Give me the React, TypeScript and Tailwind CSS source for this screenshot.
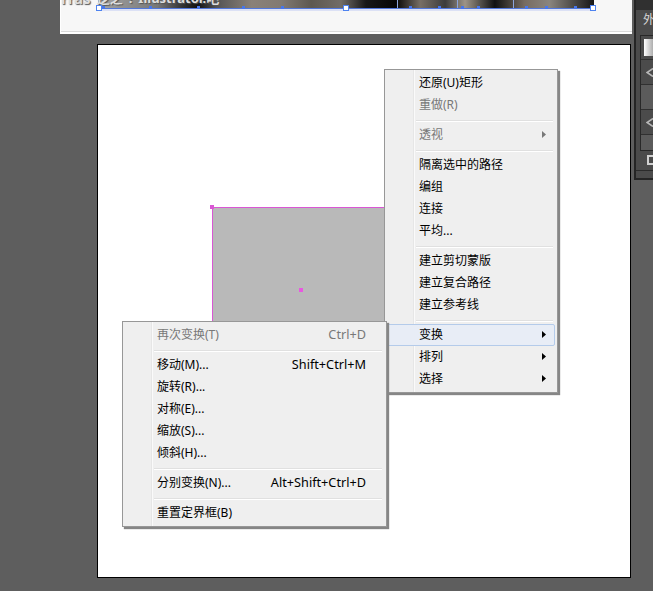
import React from "react";

type Item = { label: string; keys?: string; off?: boolean; sub?: boolean; active?: boolean };

const objectMenu: Item[][] = [
  [{ label: "还原(U)矩形" }, { label: "重做(R)", off: true }],
  [{ label: "透视", off: true, sub: true }],
  [{ label: "隔离选中的路径" }, { label: "编组" }, { label: "连接" }, { label: "平均..." }],
  [{ label: "建立剪切蒙版" }, { label: "建立复合路径" }, { label: "建立参考线" }],
  [
    { label: "变换", sub: true, active: true },
    { label: "排列", sub: true },
    { label: "选择", sub: true },
  ],
];

const transformMenu: Item[][] = [
  [{ label: "再次变换(T)", keys: "Ctrl+D", off: true }],
  [
    { label: "移动(M)...", keys: "Shift+Ctrl+M" },
    { label: "旋转(R)..." },
    { label: "对称(E)..." },
    { label: "缩放(S)..." },
    { label: "倾斜(H)..." },
  ],
  [{ label: "分别变换(N)...", keys: "Alt+Shift+Ctrl+D" }],
  [{ label: "重置定界框(B)" }],
];

function Menu({ groups, className }: { groups: Item[][]; className: string }) {
  return (
    <div
      className={`absolute border border-[#979797] bg-[#efefef] bg-[linear-gradient(90deg,transparent_28px,#e6e6e6_28px,#e6e6e6_29px,#fafafa_29px,#fafafa_30px,transparent_30px)] p-[2px] shadow-[2px_2px_1px_#868686] ${className}`}
    >
      {groups.map((group, g) => (
        <div key={g}>
          {g > 0 && (
            <div className="h-2 pt-1 pr-[2px] pl-[29px]">
              <div className="h-[2px] border-t border-[#e0e0e0] bg-white"></div>
            </div>
          )}
          {group.map((item) => (
            <div
              key={item.label}
              className={`flex h-[22px] items-center justify-between rounded-[2px] border pl-[31px] whitespace-nowrap ${
                item.active ? "border-[#b4cbea] bg-[#e8edf6]" : "border-transparent"
              } ${item.off ? "text-[#787878]" : "text-black"} ${item.sub ? "pr-[8px]" : "pr-[17px]"}`}
            >
              <span>{item.label}</span>
              {item.keys && <span className="pb-[2px] text-[12.7px]">{item.keys}</span>}
              {item.sub && (
                <svg className="mb-px h-[7px] w-[4px]" viewBox="0 0 4 7">
                  <path d="M0 0L4 3.5L0 7Z" fill="currentColor" />
                </svg>
              )}
            </div>
          ))}
        </div>
      ))}
    </div>
  );
}

// anchor points along the bottom edge of the selected strip
const anchors = [31, 78, 126, 171, 210, 338, 367, 390, 406, 454, 474, 503];

function Strip() {
  return (
    <div className="ml-[60px] h-[34px] w-[572px] overflow-hidden border-b-2 border-l border-white bg-[#f7f7f7]">
      <div className="grid">
        <div className="col-start-1 row-start-1 px-[37px]">
          <div className="h-[8px] w-[496px] bg-[linear-gradient(90deg,#a5a5a5_0%,#777_12%,#333_17%,#111_20%,#555_24%,#8a8178_31%,#817a73_37%,#5d5850_43%,#716c67_49%,#171717_54%,#050505_60%,#776e65_65%,#3c3c3c_70%,#9d9488_74%,#111_80%,#776c62_86%,#8a857e_91%,#161616_100%)]"></div>
          <div className="h-px w-[496px] bg-[#5278da]"></div>
          <div className="h-[2px] w-[496px] bg-[#dce1f5]"></div>
        </div>
        <div className="col-start-1 row-start-1 -mt-[12px] flex h-5 gap-[6px] text-[13px] leading-5 font-bold whitespace-nowrap text-[#dedede] [text-shadow:1px_1px_1px_#555]">
          <span className="text-[15px]">rras</span>
          <span>逻之</span>
          <span>!</span>
          <span>Illustrator.吧</span>
        </div>
        <svg className="col-start-1 row-start-1 h-3 w-[540px]" viewBox="0 0 540 12">
          {anchors.map((x) => (
            <rect key={x} x={x + 10} y="6" width="3" height="3" fill="#4876e8" />
          ))}
          <path d="M336.5 0V8M396.5 0V8M452.5 0V8" stroke="#8ca5dc" fill="none" />
          {[38, 285, 532].map((x) => (
            <rect key={x} x={x - 2.5} y="5.5" width="5" height="5" fill="white" stroke="#4e83f0" />
          ))}
        </svg>
      </div>
      <div className="mt-[19px] h-px bg-[#d9d9d9]"></div>
    </div>
  );
}

function Eye() {
  return (
    <svg className="h-[9px] w-[12px] shrink-0" viewBox="0 0 12 9">
      <path d="M7 0.5L1 4.5L7 8.5" fill="none" stroke="#b8b8b8" strokeWidth="1.6" />
    </svg>
  );
}

function Panel() {
  return (
    <div className="h-[180px] w-[19px] overflow-hidden border-b-2 border-l-2 border-[#252525] bg-[#4b4b4b]">
      <div className="h-[10px] bg-[#303030]"></div>
      <div className="h-[25px] pt-[2px] pl-[7px] leading-4 whitespace-nowrap text-[#d8d8d8]">外观</div>
      <div className="ml-[4px] h-[116px] w-5 border border-[#282828]">
        <div className="h-[24px] border-b border-[#303030] pt-[3px] pl-[3px]">
          <div className="h-[17px] w-5 bg-linear-to-r from-white to-[#555]"></div>
        </div>
        <div className="flex h-[25px] items-center border-b border-[#303030] pl-[5px]">
          <Eye />
        </div>
        <div className="h-[25px] border-b border-[#303030] bg-[#5b5b5b]"></div>
        <div className="flex h-[25px] items-center border-b border-[#303030] pl-[5px]">
          <Eye />
        </div>
        <div className="h-[15px] bg-[#5b5b5b]"></div>
      </div>
      <div className="mt-[4px] ml-[11px] h-[10px] w-[10px] border-2 border-[#d0d0d0]"></div>
      <div className="mt-[5px] h-px bg-[#2b2b2b]"></div>
    </div>
  );
}

function Artboard() {
  return (
    <div className="mt-[10px] ml-[97px] h-[534px] w-[534px] border border-black bg-white pt-[160px] pl-[112px]">
      <svg className="h-[164px] w-[184px]" viewBox="0 0 184 164">
        <rect x="2" y="2" width="182" height="162" fill="#b9b9b9" />
        <path d="M2.5 164V2.5H184" fill="none" stroke="#d957d4" />
        <rect x="0" y="0" width="4" height="4" fill="#d957d4" />
        <rect x="89" y="83" width="4" height="4" fill="#e858e0" />
      </svg>
    </div>
  );
}

export default function App() {
  return (
    <div className="relative flex h-[591px] w-[653px] items-start overflow-hidden bg-[#5e5e5e] font-['Noto_Sans','Noto_Sans_CJK_SC',sans-serif] text-[12px] leading-[18px]">
      <div className="w-[634px] shrink-0">
        <Strip />
        <Artboard />
      </div>
      <Panel />
      <Menu groups={objectMenu} className="top-[69px] left-[384px] w-[174px]" />
      <Menu groups={transformMenu} className="top-[321px] left-[122px] w-[265px]" />
    </div>
  );
}
